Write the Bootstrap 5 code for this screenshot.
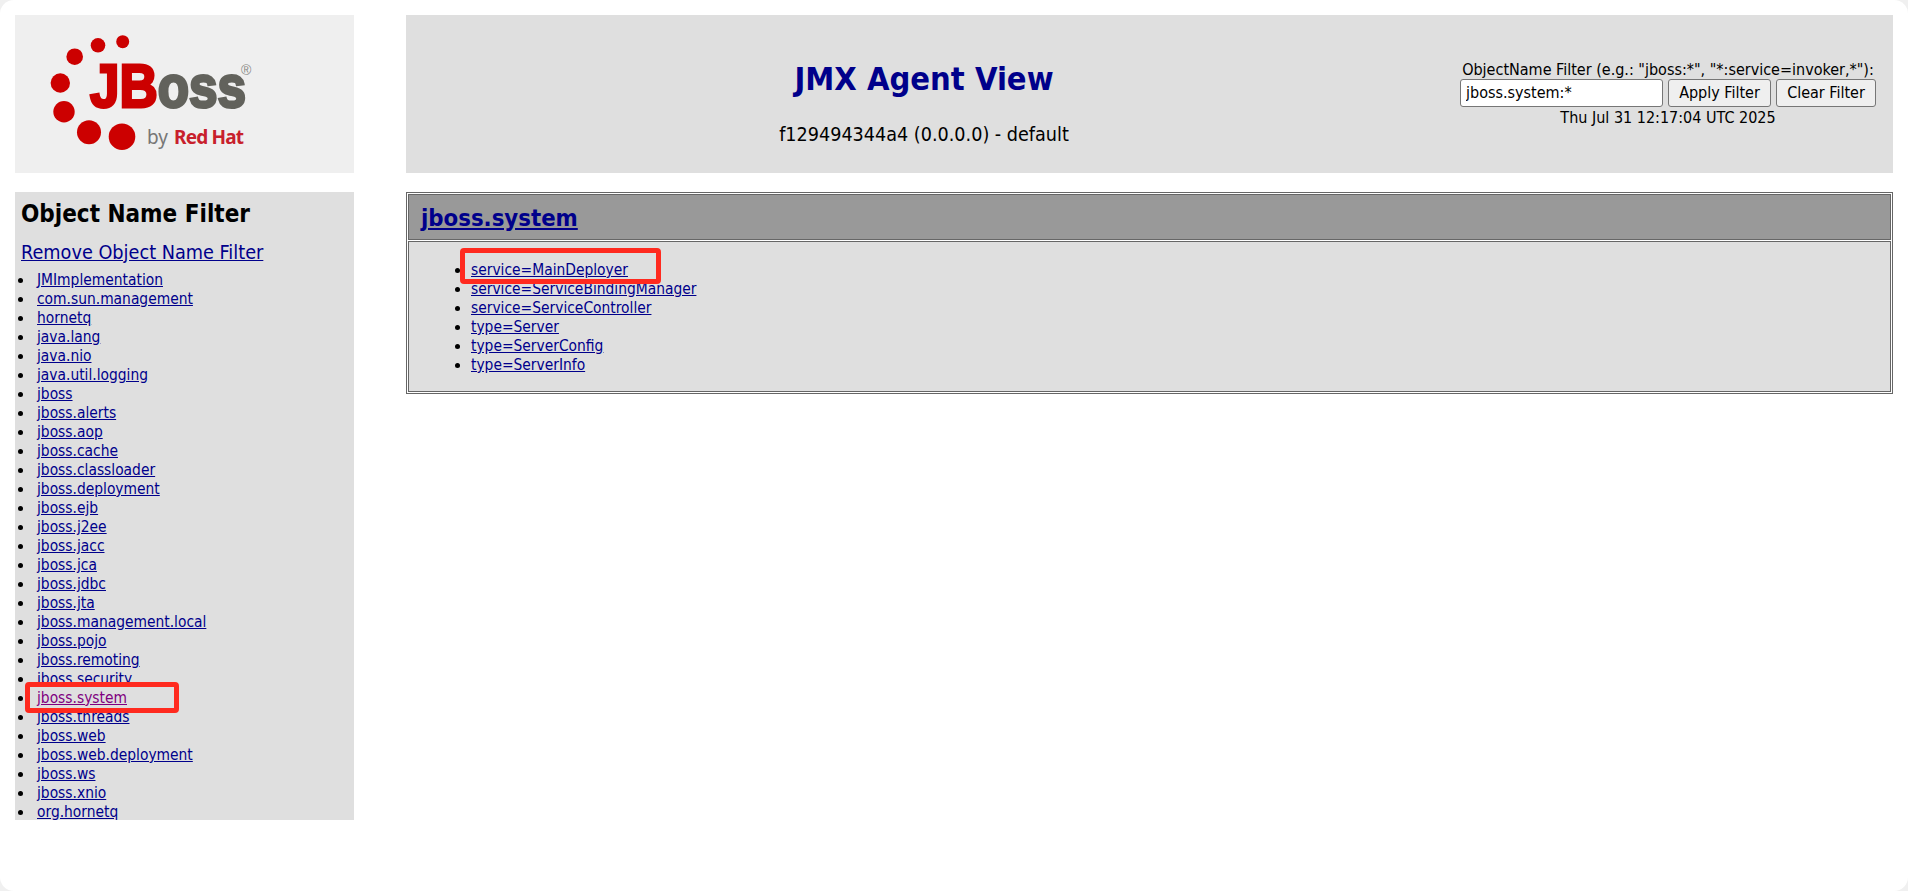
<!DOCTYPE html>
<html lang="en">
<head>
<meta charset="utf-8">
<title>JMX Agent View</title>
<link href="https://cdn.jsdelivr.net/npm/bootstrap@5.3.0/dist/css/bootstrap.min.css" rel="stylesheet">
<style>
html{background:#f0f0f0;height:100%;}
body{background:#fff;color:#000;font-family:"DejaVu Sans Condensed","DejaVu Sans",sans-serif;font-size:16px;line-height:19px;height:891px;overflow:hidden;border-radius:14px;}
a{color:#00008b;}
a.seen{color:#800080;}
.page-shell{display:grid;grid-template-columns:339px 1487px;column-gap:52px;row-gap:19px;padding:15px 15px 0;}
.logo-pane{background:#efefef;height:158px;}
.head-pane{background:#dfdfdf;height:158px;display:flex;align-items:center;}
.head-title{flex:1 1 auto;text-align:center;padding:17px 18px 0 0;}
.head-title h1{color:#00008b;font-size:32.4px;line-height:38px;font-weight:700;margin:0 0 25px;}
.head-title p{font-size:19.6px;line-height:23px;margin:0;}
.filter-box{flex:0 0 416px;margin:-2px 17px 0 0;text-align:center;white-space:nowrap;}
.filter-row{display:flex;gap:5px;justify-content:center;margin-bottom:1px;}
.filter-input{width:203px;height:28px;border:1px solid #767676;border-radius:3px;background:#fff;padding:1px 5px;font:inherit;font-size:16px;}
.filter-btn{height:28px;border:1px solid #767676;border-radius:3px;background:#efefef;padding:0;font:inherit;font-size:16px;color:#000;white-space:nowrap;}
.btn-apply{width:103px;}
.btn-clear{width:100px;}
.side-pane{background:#dfdfdf;height:628px;padding:8px 0 0;overflow:hidden;position:relative;}
.side-pane h2{font-size:24px;line-height:28px;font-weight:700;margin:0 6px 13px;}
.side-remove{display:block;font-size:19.7px;line-height:23px;margin:0 6px 7px;}
.side-list{margin:0;padding:0 0 0 22px;list-style:none;font-size:15.4px;}
.side-list li{height:19px;position:relative;}
.side-list li::before{content:"";position:absolute;left:-19px;top:7px;width:5px;height:5px;border-radius:50%;background:#000;}
.main-box{border:1px solid #666;padding:1px;height:202px;align-self:start;position:relative;}
.main-head{background:#999;border:1px solid #666;height:46px;padding:3px 12px 0;display:flex;align-items:center;}
.main-head a{font-size:23.7px;font-weight:700;}
.main-body{background:#dfdfdf;border:1px solid #666;margin-top:1px;height:151px;padding:19px 0 0;}
.main-body ul{margin:0;padding:0 0 0 62px;font-size:15.4px;}
.main-body li{height:19px;}
.mark-box{position:absolute;border:5px solid #ff2a1f;border-radius:4px;}
.mark-side{left:10px;top:490px;width:154px;height:31px;}
.mark-main{left:53px;top:55px;width:201px;height:36px;}
</style>
</head>
<body>
<div class="page-shell">
  <div class="logo-pane">
    <svg width="339" height="158" viewBox="0 0 339 158" role="img" aria-label="JBoss by Red Hat">
      <g fill="#cc0000">
        <circle cx="107.7" cy="26.7" r="6.5"/><circle cx="83" cy="30.3" r="7.3"/><circle cx="59.7" cy="41.7" r="8.3"/>
        <circle cx="45.3" cy="68" r="9.7"/><circle cx="49" cy="96.7" r="10.7"/><circle cx="74" cy="117.3" r="12"/><circle cx="107" cy="121.7" r="13.3"/>
      </g>
      <text x="75" y="92" font-family="Liberation Sans" font-weight="700" textLength="156" lengthAdjust="spacingAndGlyphs"><tspan font-size="62" fill="#cc0000" stroke="#cc0000" stroke-width="3">JB</tspan><tspan font-size="60" fill="#62625c" stroke="#62625c" stroke-width="3">oss</tspan></text>
      <text x="226" y="60" font-family="Liberation Sans" font-size="14" fill="#8a8a86">®</text>
      <text x="132" y="129" font-family="Noto Sans" font-size="19" fill="#777">by</text>
      <text x="159" y="129" font-family="Noto Sans" font-weight="700" font-size="19" fill="#c8202c" textLength="70">Red Hat</text>
    </svg>
  </div>
  <div class="head-pane">
    <div class="head-title">
      <h1>JMX Agent View</h1>
      <p>f129494344a4 (0.0.0.0) - default</p>
    </div>
    <div class="filter-box">
      <div>ObjectName Filter (e.g.: "jboss:*", "*:service=invoker,*"):</div>
      <div class="filter-row">
        <input class="filter-input" type="text" value="jboss.system:*">
        <button class="filter-btn btn-apply" type="button">Apply Filter</button>
        <button class="filter-btn btn-clear" type="button">Clear Filter</button>
      </div>
      <div>Thu Jul 31 12:17:04 UTC 2025</div>
    </div>
  </div>
  <div class="side-pane">
    <h2>Object Name Filter</h2>
    <a class="side-remove" href="#">Remove Object Name Filter</a>
    <ul class="side-list">
      <li><a href="#">JMImplementation</a></li>
      <li><a href="#">com.sun.management</a></li>
      <li><a href="#">hornetq</a></li>
      <li><a href="#">java.lang</a></li>
      <li><a href="#">java.nio</a></li>
      <li><a href="#">java.util.logging</a></li>
      <li><a href="#">jboss</a></li>
      <li><a href="#">jboss.alerts</a></li>
      <li><a href="#">jboss.aop</a></li>
      <li><a href="#">jboss.cache</a></li>
      <li><a href="#">jboss.classloader</a></li>
      <li><a href="#">jboss.deployment</a></li>
      <li><a href="#">jboss.ejb</a></li>
      <li><a href="#">jboss.j2ee</a></li>
      <li><a href="#">jboss.jacc</a></li>
      <li><a href="#">jboss.jca</a></li>
      <li><a href="#">jboss.jdbc</a></li>
      <li><a href="#">jboss.jta</a></li>
      <li><a href="#">jboss.management.local</a></li>
      <li><a href="#">jboss.pojo</a></li>
      <li><a href="#">jboss.remoting</a></li>
      <li><a href="#">jboss.security</a></li>
      <li><a class="seen" href="#">jboss.system</a></li>
      <li><a href="#">jboss.threads</a></li>
      <li><a href="#">jboss.web</a></li>
      <li><a href="#">jboss.web.deployment</a></li>
      <li><a href="#">jboss.ws</a></li>
      <li><a href="#">jboss.xnio</a></li>
      <li><a href="#">org.hornetq</a></li>
    </ul>
    <div class="mark-box mark-side"></div>
  </div>
  <div class="main-box">
    <div class="main-head"><a href="#">jboss.system</a></div>
    <div class="main-body">
      <ul>
        <li><a href="#">service=MainDeployer</a></li>
        <li><a href="#">service=ServiceBindingManager</a></li>
        <li><a href="#">service=ServiceController</a></li>
        <li><a href="#">type=Server</a></li>
        <li><a href="#">type=ServerConfig</a></li>
        <li><a href="#">type=ServerInfo</a></li>
      </ul>
    </div>
    <div class="mark-box mark-main"></div>
  </div>
</div>
</body>
</html>
